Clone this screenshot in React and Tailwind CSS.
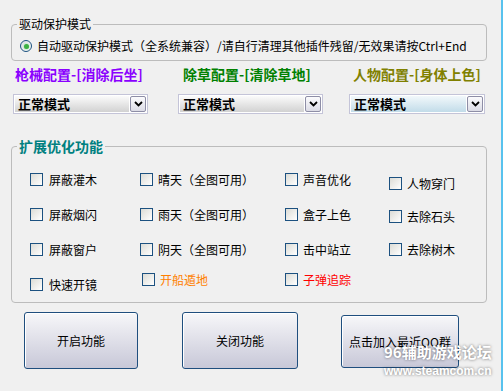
import React from "react";

const FONT = "font-['Noto_Sans_CJK_SC','Liberation_Sans',sans-serif]";

const columns = [
  {
    width: "w-[110px]",
    items: [
      { label: "屏蔽灌木", cls: "mt-[18px]", gap: "gap-[6px]" },
      { label: "屏蔽烟闪", cls: "mt-[22px]", gap: "gap-[6px]" },
      { label: "屏蔽窗户", cls: "mt-[22px]", gap: "gap-[6px]" },
      { label: "快速开镜", cls: "mt-[22px]", gap: "gap-[6px]" },
    ],
  },
  {
    width: "w-[145px]",
    items: [
      { label: "晴天（全图可用）", cls: "mt-[18px]", gap: "gap-[5px]" },
      { label: "雨天（全图可用）", cls: "mt-[22px]", gap: "gap-[5px]" },
      { label: "阴天（全图可用）", cls: "mt-[22px]", gap: "gap-[5px]" },
      { label: "开船遁地", cls: "mt-[17px] ml-[2px]", gap: "gap-[5px]", color: "text-[#ff8000]" },
    ],
  },
  {
    width: "w-[104px]",
    items: [
      { label: "声音优化", cls: "mt-[18px]", gap: "gap-[5px]" },
      { label: "盒子上色", cls: "mt-[22px]", gap: "gap-[5px]" },
      { label: "击中站立", cls: "mt-[22px]", gap: "gap-[5px]" },
      { label: "子弹追踪", cls: "mt-[17px]", gap: "gap-[5px]", color: "text-[#ff0000]" },
    ],
  },
  {
    width: "flex-1",
    items: [
      { label: "人物穿门", cls: "mt-[22px]", gap: "gap-[5px]" },
      { label: "去除石头", cls: "mt-[20px]", gap: "gap-[5px]" },
      { label: "去除树木", cls: "mt-[20px]", gap: "gap-[5px]" },
    ],
  },
];

const Checkbox = () => (
  <div className="w-[13px] h-[13px] shrink-0 border border-[#1c5180] bg-linear-to-br from-[#dcdcd6] to-[#ffffff]" />
);

const Dropdown = ({ width, blue }) => (
  <div className={`${width} h-[20px] border border-[#c4c4d8] bg-white p-[1px] flex`}>
    <div
      className={`flex-1 flex items-center pl-[3px] text-[13px] font-bold leading-[16px] text-black bg-linear-to-b ${
        blue ? "from-[#f2f8fb] to-[#c2dce9]" : "from-[#fbfbfb] to-[#d2d2d2]"
      }`}
    >
      正常模式
    </div>
    <div className="w-[16px] ml-[1px] border border-[#8e8ea6] rounded-[2px] bg-linear-to-b from-[#fbfbfd] to-[#dcdce6] flex items-center justify-center">
      <svg width="9" height="6" viewBox="0 0 9 6">
        <path d="M1 1 L4.5 4.5 L8 1" fill="none" stroke="#000" strokeWidth="1.8" />
      </svg>
    </div>
  </div>
);

const Button = ({ label, cls }) => (
  <button
    className={`${cls} border border-[#1f4e7e] rounded-[3px] bg-linear-to-b from-[#f7f7f9] to-[#c8c8d8] shadow-[inset_1px_1px_0_#ffffff] text-[12px] text-black leading-[16px] flex items-center justify-center`}
  >
    {label}
  </button>
);

export default function App() {
  return (
    <div
      className={`${FONT} relative w-[503px] h-[391px] bg-[#f0f0f0] border-r-2 border-[#58c2ee] overflow-hidden text-black`}
    >
      {/* ── 驱动保护模式 ───────────────────────────── */}
      <fieldset className="mt-[16px] ml-[11px] w-[476px] border border-[#bcbcbc] rounded-[4px]">
        <legend className="ml-[5px] px-[2px] text-[12px] leading-[16px]">驱动保护模式</legend>
        <div className="pt-[3px] pb-[3px]">
          <div className="h-[22px] flex items-center ml-[8px] gap-[5px]">
            <div className="w-[12px] h-[12px] rounded-full border border-[#1c5180] bg-linear-to-br from-[#d8dde2] to-[#ffffff] flex items-center justify-center">
              <div className="w-[5px] h-[5px] rounded-full bg-[#3cb043] shadow-[0_0_2px_#7fd67f]" />
            </div>
            <span className="text-[12px] leading-[16px] whitespace-nowrap">
              自动驱动保护模式（全系统兼容）/请自行清理其他插件残留/无效果请按Ctrl+End
            </span>
          </div>
        </div>
      </fieldset>

      {/* ── Config headers ──────────────────────────── */}
      <div className="mt-[5px] flex pl-[15px] text-[14px] font-bold leading-[16px] whitespace-nowrap">
        <div className="w-[168px] text-[#8a00ff]">枪械配置-[消除后坐]</div>
        <div className="w-[170px] text-[#008000]">除草配置-[清除草地]</div>
        <div className="text-[#808000]">人物配置-[身体上色]</div>
      </div>

      <div className="mt-[12px] flex pl-[13px]">
        <Dropdown width="w-[135px]" />
        <div className="ml-[30px]">
          <Dropdown width="w-[145px]" />
        </div>
        <div className="ml-[26px]">
          <Dropdown width="w-[136px]" blue />
        </div>
      </div>

      {/* ── 扩展优化功能 ───────────────────────────── */}
      <fieldset className="mt-[23px] ml-[11px] w-[476px] border border-[#bcbcbc] rounded-[4px]">
        <legend className="ml-[5px] px-[2px] text-[14px] font-bold leading-[18px] text-[#008080]">
          扩展优化功能
        </legend>
        <div className="h-[147px] flex pl-[18px]">
          {columns.map((col, i) => (
            <div key={i} className={`${col.width} flex flex-col`}>
              {col.items.map((it) => (
                <div key={it.label} className={`${it.cls} ${it.gap} h-[13px] flex items-center`}>
                  <Checkbox />
                  <span className={`text-[12px] leading-[16px] whitespace-nowrap ${it.color || "text-black"}`}>
                    {it.label}
                  </span>
                </div>
              ))}
            </div>
          ))}
        </div>
      </fieldset>

      {/* ── Buttons ─────────────────────────────────── */}
      <div className="mt-[9px] flex items-start pl-[24px]">
        <Button label="开启功能" cls="w-[114px] h-[57px]" />
        <Button label="关闭功能" cls="ml-[44px] w-[116px] h-[57px]" />
        <Button label="点击加入最近QQ群" cls="ml-[43px] mt-[3px] w-[118px] h-[53px]" />
      </div>

      {/* watermark over the corner */}
      <div className="absolute left-[384px] top-[343px] text-white font-bold [text-shadow:0_0_3px_rgba(0,0,0,0.55)] pointer-events-none">
        <div className="text-[15px] leading-[18px] whitespace-nowrap">96辅助游戏论坛</div>
        <div className="mt-[3px] font-['Liberation_Sans',sans-serif] text-[12px] leading-[14px] whitespace-nowrap">
          www.steamcom.cn
        </div>
      </div>
    </div>
  );
}
